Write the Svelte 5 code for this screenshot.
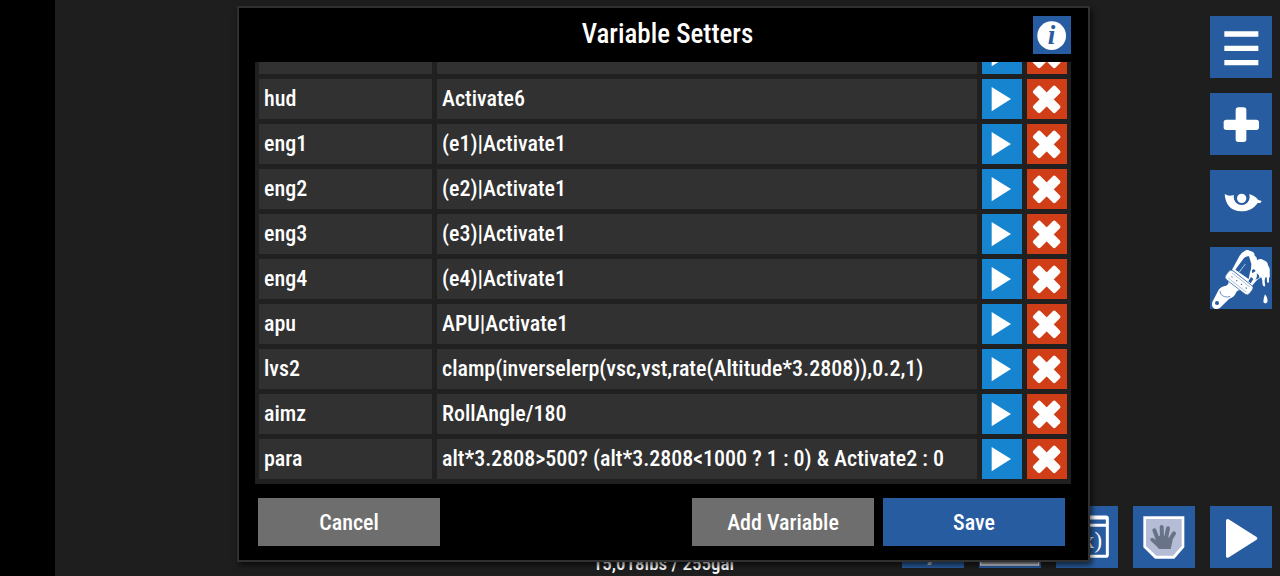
<script>
  let setters = $state([
    { name: '', expression: '' },
    { name: 'hud', expression: 'Activate6' },
    { name: 'eng1', expression: '(e1)|Activate1' },
    { name: 'eng2', expression: '(e2)|Activate1' },
    { name: 'eng3', expression: '(e3)|Activate1' },
    { name: 'eng4', expression: '(e4)|Activate1' },
    { name: 'apu', expression: 'APU|Activate1' },
    { name: 'lvs2', expression: 'clamp(inverselerp(vsc,vst,rate(Altitude*3.2808)),0.2,1)' },
    { name: 'aimz', expression: 'RollAngle/180' },
    { name: 'para', expression: 'alt*3.2808>500? (alt*3.2808<1000 ? 1 : 0) & Activate2 : 0' },
  ]);

  function add() {
    setters.push({ name: '', expression: '' });
  }

  function remove(i) {
    setters.splice(i, 1);
  }
</script>

<div class="screen">
  <div class="notch"></div>
  <main class="designer">
    <nav class="tools" aria-label="Tools">
      <button class="tile" aria-label="Menu">
        <svg viewBox="0 0 186 186"><path d="M43 46h102v16H43zM43 89h102v16H43zM43 132h102v16H43z" fill="#fff" /></svg>
      </button>
      <button class="tile" aria-label="Add part">
        <svg viewBox="0 0 186 186" fill="#fff">
          <rect x="77" y="43" width="32" height="104" rx="8" />
          <rect x="41" y="80" width="106" height="31" rx="8" />
        </svg>
      </button>
      <button class="tile" aria-label="View">
        <svg viewBox="0 0 186 186" fill="#fff">
          <path d="M44 72Q58 82 80 72H112Q132 74 145 90L155 93L151 99L143 99C129 118 114 124 94 124C64 124 46 104 44 72Z" />
          <circle cx="95" cy="81" r="24" fill="#285ca0" />
          <circle cx="95" cy="85" r="14" />
        </svg>
      </button>
      <button class="tile" aria-label="Paint">
        <svg viewBox="0 0 186 186">
          <!-- wet paint and drips -->
          <path d="M66 68L88 28Q94 17 103 13Q111 6 120 12Q134 14 134 26Q142 30 141 40Q151 32 161 40Q173 43 174 55Q181 64 179 78Q181 89 177 94L177 105Q173 112 171 103L170 90Q164 90 164 105Q168 120 161 118Q156 115 157 101L154 91L142 98Q132 108 126 117Z" fill="#fff" />
          <path d="M76 68L102 33Q110 26 117 28L124 51Q124 66 120 76L116 96Z" fill="#285ca0" />
          <path d="M88 75L106 51" stroke="#fff" stroke-width="2" />
          <path d="M126 70Q132 62 137 72Q130 78 126 78ZM140 79Q149 84 148 93L136 98Q143 91 140 79ZM123 90L130 96L122 109L115 103Z" fill="#285ca0" />
          <path d="M165 142Q175 154 172 166Q166 173 160 165Q160 154 165 142Z" fill="#fff" />
          <!-- handle -->
          <path d="M54 96Q61 115 42 118Q28 122 23 134L7 165Q3 181 14 185Q26 189 35 178L58 155Q73 150 78 137Q80 130 93 128Z" fill="#fff" />
          <path d="M30 132Q31 145 44 149Q54 152 61 148" stroke="#285ca0" stroke-width="2" fill="none" />
          <circle cx="21" cy="168" r="6" fill="#285ca0" />
          <!-- ferrule -->
          <g transform="rotate(38 87 107)">
            <rect x="42" y="90" width="90" height="33" rx="10" fill="#fff" stroke="#285ca0" stroke-width="2" />
            <path d="M52 97H122M52 116H122" stroke="#8fa8cf" stroke-width="2" />
            <path d="M60 105v3M78 105v3M96 105v3M114 105v3" stroke="#285ca0" stroke-width="4" />
          </g>
        </svg>
      </button>
    </nav>

    <div class="bottom">
      <p class="stats">15,018lbs / 255gal</p>
      <nav class="actions" aria-label="Actions">
        <button class="tile" aria-label="Wrench">
          <svg viewBox="0 0 186 186"><path d="M60 60L96 150L88 176L76 178L84 150Z" fill="#b9b9bd" /></svg>
        </button>
        <button class="tile" aria-label="Screen">
          <svg viewBox="0 0 186 186"><rect x="5" y="32" width="174" height="145" fill="#a9a9ad" stroke="#fff" stroke-width="4" /></svg>
        </button>
        <button class="tile" aria-label="Variables">
          <svg viewBox="0 0 186 186">
            <rect x="33" y="33" width="121" height="118" rx="4" fill="none" stroke="#fff" stroke-width="9" />
            <path d="M33 36h121M33 58h121" stroke="#fff" stroke-width="9" />
            <text class="fx" x="138" y="127" text-anchor="end">f(x)</text>
          </svg>
        </button>
        <button class="tile" aria-label="Shield">
          <svg viewBox="0 0 186 186">
            <path d="M31 31H154V124L124 158H66L31 124Z" fill="#fff" />
            <path d="M39 39H146V120L120 149H70L39 120Z" fill="#b5bcd5" />
            <path d="M74 99L64 73M87 96L86 63M99 96L105 67M110 103L123 82" stroke="#687387" stroke-width="12" stroke-linecap="round" />
            <path d="M68 94Q92 82 109 96L119 103L113 129H78L70 120L53 104Q49 94 60 96L70 103Z" fill="#687387" />
          </svg>
        </button>
        <button class="tile" aria-label="Play">
          <svg viewBox="0 0 186 186"><path d="M53 44L137 97L53 150Z" fill="#fff" stroke="#fff" stroke-width="10" stroke-linejoin="round" /></svg>
        </button>
      </nav>
    </div>
  </main>

  <div class="overlay">
    <div class="dialog" role="dialog" aria-labelledby="title">
      <header class="header">
        <h1 id="title">Variable Setters</h1>
        <button class="info" aria-label="Help">
          <svg viewBox="0 0 114 114">
            <circle cx="56" cy="59" r="43" fill="#fff" />
            <text class="info-i" x="56" y="85" text-anchor="middle">i</text>
          </svg>
        </button>
      </header>

      <div class="list">
        {#each setters as setter, i}
          <div class="row">
            <input class="field" aria-label="Variable name" bind:value={setter.name} />
            <input class="field" aria-label="Expression" bind:value={setter.expression} />
            <button class="run" aria-label="Edit">
              <svg viewBox="0 0 120 120"><path d="M29 24L87 60L29 97Z" fill="#fff" /></svg>
            </button>
            <button class="remove" aria-label="Remove" onclick={() => remove(i)}>
              <svg viewBox="0 0 120 120">
                <g transform="rotate(45 59 61)" fill="#fff">
                  <rect x="44" y="14" width="30" height="94" rx="6" />
                  <rect x="12" y="46" width="94" height="30" rx="6" />
                </g>
              </svg>
            </button>
          </div>
        {/each}
      </div>

      <footer class="footer">
        <button class="btn">Cancel</button>
        <button class="btn btn--add" onclick={add}>Add Variable</button>
        <button class="btn btn--primary">Save</button>
      </footer>
    </div>
  </div>
</div>

<style>
  :global(body) { background: #000; }
  .screen {
    --blue: #285ca0;
    position: relative; display: flex; height: 100vh; overflow: hidden;
    background: #1e1e1e; color: #fff;
    font-family: "Roboto Condensed", "Liberation Sans Narrow", Roboto, sans-serif;
    font-size: 22px; font-weight: 500; line-height: 28px;
  }
  .screen * { box-sizing: border-box; }
  button, input { margin: 0; padding: 0; border: 0; border-radius: 0; color: inherit; font: inherit; }
  svg { display: block; width: 100%; height: 100%; }

  .notch { flex: 0 0 55px; background: #000; }
  .designer {
    flex: 1; display: flex; flex-direction: column; justify-content: space-between;
    padding: 16px 8px 8px 0;
  }
  .tools { display: flex; flex-direction: column; align-items: flex-end; gap: 15px; }
  .tile { width: 62px; height: 62px; background: var(--blue); }
  .bottom { display: grid; grid-template-columns: 1fr auto 1fr; align-items: end; }
  .stats { grid-column: 2; margin: 0 0 -4px; font-size: 19px; line-height: 16px; }
  .actions { display: flex; justify-content: flex-end; gap: 15px; }
  .fx { font: 68px "Liberation Serif", serif; fill: #fff; }

  .overlay { position: absolute; inset: 0; display: flex; padding: 6px 190px 14px 237px; }
  .dialog {
    flex: 1; min-width: 0; display: flex; flex-direction: column;
    background: #000; border: 2px solid #303030; box-shadow: 2px 3px 6px #000a;
  }
  .header { display: flex; align-items: flex-start; height: 54px; padding: 8px 17px 0 63px; }
  h1 { flex: 1; margin: 0; padding-top: 4px; font-size: 27px; font-weight: 500; line-height: 28px; text-align: center; }
  .info { width: 38px; height: 38px; background: var(--blue); }
  .info-i { font: italic bold 82px "Liberation Serif", serif; fill: var(--blue); }

  .list {
    flex: 1; min-height: 0; overflow: hidden;
    display: flex; flex-direction: column; justify-content: flex-end; gap: 5px;
    margin: 0 17px 0 16px; padding: 0 4px 5px; background: #202020;
  }
  .row { flex: none; display: grid; grid-template-columns: 173px 1fr 40px 40px; gap: 5px; height: 40px; }
  .field { min-width: 0; padding: 0 5px; background: #313131; }
  .run { background: #1784d0; }
  .remove { background: #d03e17; }

  .footer { display: flex; gap: 9px; padding: 14px 23px 14px 19px; }
  .btn { width: 182px; height: 48px; padding-top: 2px; background: #6e6e6e; }
  .btn--add { margin-left: auto; }
  .btn--primary { background: var(--blue); }
</style>
